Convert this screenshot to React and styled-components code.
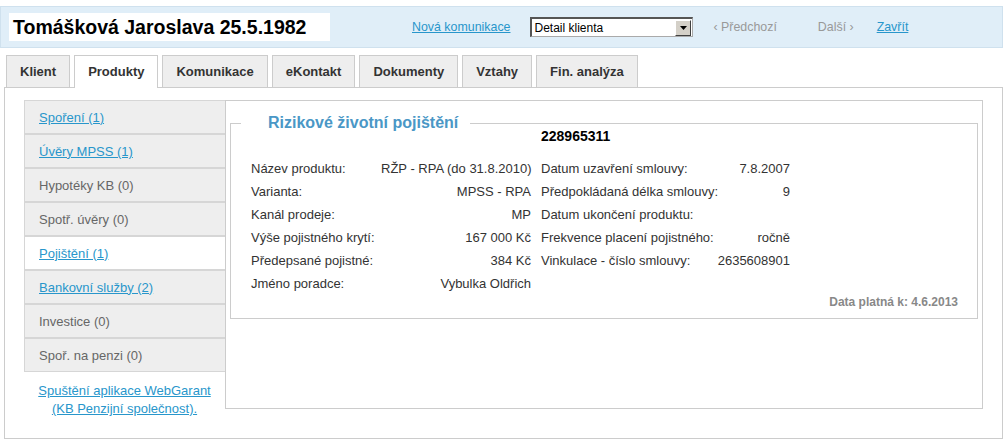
import React from "react";
import styled, { createGlobalStyle } from "styled-components";

const GlobalStyle = createGlobalStyle`
  html, body { margin: 0; padding: 0; background: #fff; }
  body { font-family: "Liberation Sans", Arial, sans-serif; color: #333; }
  * { box-sizing: border-box; }
`;

const LINK = "#2896cb";

const Page = styled.div`
  width: 1004px;
  padding-top: 6px;
`;

const Header = styled.div`
  width: 1003px;
  height: 42px;
  background: #e0eef8;
  border: 1px solid #cfe1ee;
  display: flex;
  align-items: center;
  padding-left: 8px;
`;

const TitleBox = styled.div`
  width: 321px;
  height: 28px;
  background: #fff;
  display: flex;
  align-items: center;
  padding-left: 4px;
  font-size: 19.5px;
  font-weight: bold;
  color: #000;
  white-space: nowrap;
`;

const HeaderNav = styled.div`
  display: flex;
  align-items: center;
  margin-left: 82px;
  font-size: 12.4px;
`;

const HeaderLink = styled.a`
  color: ${LINK};
  text-decoration: underline;
  margin-right: ${(p) => p.$mr || 0}px;
  cursor: pointer;
`;

const Muted = styled.span`
  color: #999;
  margin-right: ${(p) => p.$mr || 0}px;
`;

const FakeSelect = styled.div`
  width: 163px;
  height: 20px;
  background: #fff;
  border-top: 2px solid #555;
  border-left: 2px solid #555;
  border-right: 1px solid #aaa;
  border-bottom: 1px solid #aaa;
  display: flex;
  align-items: center;
  justify-content: space-between;
  padding-left: 2px;
  margin-right: 20px;
  font-size: 12px;
  color: #000;
`;

const SelectButton = styled.div`
  width: 16px;
  height: 16px;
  background: #d4d0c8;
  border-top: 1px solid #fff;
  border-left: 1px solid #fff;
  border-right: 1px solid #404040;
  border-bottom: 1px solid #404040;
  display: flex;
  align-items: center;
  justify-content: center;
  margin-right: 1px;
`;

const Tabs = styled.div`
  display: flex;
  padding-left: 6px;
  margin-top: 7px;
  position: relative;
  z-index: 1;
`;

const Tab = styled.div`
  height: ${(p) => (p.$active ? 33 : 32)}px;
  margin-bottom: ${(p) => (p.$active ? -1 : 0)}px;
  padding: 0 13px;
  margin-right: 4px;
  border: 1px solid #ccc;
  border-bottom: none;
  background: ${(p) => (p.$active ? "#fff" : "#eeeeee")};
  font-size: 13px;
  font-weight: bold;
  color: #333;
  display: flex;
  align-items: center;
  padding-bottom: ${(p) => (p.$active ? 1 : 0)}px;
`;

const Content = styled.div`
  margin-left: 4px;
  width: 999px;
  height: 352px;
  border: 1px solid #ccc;
  display: flex;
  align-items: flex-start;
  padding: 12px 0 0 19px;
`;

const Side = styled.div`
  width: 201px;
  display: flex;
  flex-direction: column;
`;

const NavItem = styled.div`
  height: 34px;
  border: 1px solid #d6d6d6;
  border-right: none;
  background: ${(p) => (p.$active ? "#fff" : "#eeeeee")};
  display: flex;
  align-items: center;
  padding-left: 14px;
  font-size: 13px;
  color: #666;
`;

const NavLink = styled.a`
  color: ${LINK};
  text-decoration: underline;
  cursor: pointer;
`;

const WebGarant = styled.a`
  display: block;
  margin-top: 10px;
  text-align: center;
  font-size: 13px;
  line-height: 18px;
  color: ${LINK};
  text-decoration: underline;
`;

const Panel = styled.div`
  width: 758px;
  height: 309px;
  border: 1px solid #ccc;
  padding: 0 4px;
`;

const Fieldset = styled.fieldset`
  margin: 12px 0 0;
  padding: 0 0 9px 20px;
  border: 1px solid #ccc;
  min-width: 0;
`;

const Legend = styled.legend`
  margin-left: -10px;
  padding: 0 12px 0 27px;
  font-size: 16px;
  line-height: 20px;
  font-weight: bold;
  color: #4a97c6;
`;

const ContractNo = styled.div`
  margin: -5px 0 13px 280px;
  padding-left: 10px;
  font-size: 14px;
  line-height: 16px;
  font-weight: bold;
  color: #000;
`;

const Grid = styled.div`
  display: grid;
  grid-template-columns: 130px 150px 185px 74px;
  grid-auto-rows: 23px;
  align-items: center;
  font-size: 13px;
  color: #333;
`;

const Label = styled.div`
  padding-left: ${(p) => (p.$second ? 10 : 0)}px;
  white-space: nowrap;
`;

const Value = styled.div`
  text-align: right;
  white-space: nowrap;
`;

const ValidDate = styled.div`
  text-align: right;
  padding-right: 19px;
  font-size: 12px;
  line-height: 14px;
  font-weight: bold;
  color: #888;
`;

const tabs = [
  { t: "Klient" },
  { t: "Produkty", active: true },
  { t: "Komunikace" },
  { t: "eKontakt" },
  { t: "Dokumenty" },
  { t: "Vztahy" },
  { t: "Fin. analýza" },
];

const nav = [
  { t: "Spoření (1)", link: true },
  { t: "Úvěry MPSS (1)", link: true },
  { t: "Hypotéky KB (0)" },
  { t: "Spotř. úvěry (0)" },
  { t: "Pojištění (1)", link: true, active: true },
  { t: "Bankovní služby (2)", link: true },
  { t: "Investice (0)" },
  { t: "Spoř. na penzi (0)" },
];

const rows = [
  ["Název produktu:", "RŽP - RPA (do 31.8.2010)", "Datum uzavření smlouvy:", "7.8.2007"],
  ["Varianta:", "MPSS - RPA", "Předpokládaná délka smlouvy:", "9"],
  ["Kanál prodeje:", "MP", "Datum ukončení produktu:", ""],
  ["Výše pojistného krytí:", "167 000 Kč", "Frekvence placení pojistného:", "ročně"],
  ["Předepsané pojistné:", "384 Kč", "Vinkulace - číslo smlouvy:", "2635608901"],
  ["Jméno poradce:", "Vybulka Oldřich", "", ""],
];

export default function App() {
  return (
    <Page>
      <GlobalStyle />
      <Header>
        <TitleBox>Tomášková Jaroslava 25.5.1982</TitleBox>
        <HeaderNav>
          <HeaderLink $mr={20}>Nová komunikace</HeaderLink>
          <FakeSelect>
            <span>Detail klienta</span>
            <SelectButton>
              <svg width="7" height="4" viewBox="0 0 7 4">
                <path d="M0 0h7L3.5 4z" fill="#000" />
              </svg>
            </SelectButton>
          </FakeSelect>
          <Muted $mr={41}>‹ Předchozí</Muted>
          <Muted $mr={23}>Další ›</Muted>
          <HeaderLink>Zavřít</HeaderLink>
        </HeaderNav>
      </Header>
      <Tabs>
        {tabs.map((x) => (
          <Tab key={x.t} $active={x.active}>
            {x.t}
          </Tab>
        ))}
      </Tabs>
      <Content>
        <Side>
          {nav.map((n) => (
            <NavItem key={n.t} $active={n.active}>
              {n.link ? <NavLink>{n.t}</NavLink> : n.t}
            </NavItem>
          ))}
          <WebGarant>
            Spuštění aplikace WebGarant
            <br />
            (KB Penzijní společnost).
          </WebGarant>
        </Side>
        <Panel>
          <Fieldset>
            <Legend>Rizikové životní pojištění</Legend>
            <ContractNo>228965311</ContractNo>
            <Grid>
              {rows.map((r, i) => (
                <React.Fragment key={i}>
                  <Label>{r[0]}</Label>
                  <Value>{r[1]}</Value>
                  <Label $second>{r[2]}</Label>
                  <Value>{r[3]}</Value>
                </React.Fragment>
              ))}
            </Grid>
            <ValidDate>Data platná k: 4.6.2013</ValidDate>
          </Fieldset>
        </Panel>
      </Content>
    </Page>
  );
}
